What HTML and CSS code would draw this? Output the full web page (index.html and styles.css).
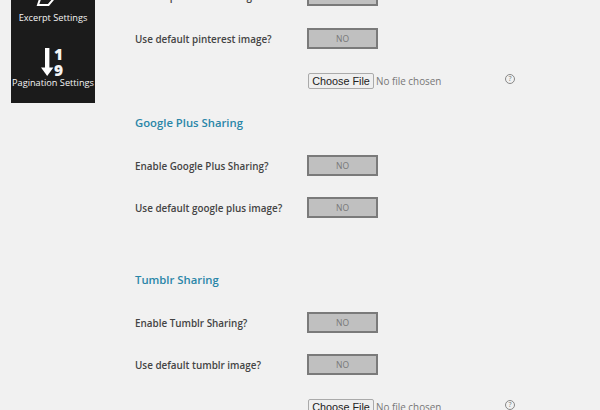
FILE: index.html
```html
<!DOCTYPE html>
<html lang="en">
<head>
    <meta charset="UTF-8">
    <meta name="viewport" content="width=device-width, initial-scale=1.0">
    <title>Sharing Settings</title>
    <link rel="stylesheet" href="styles.css">
</head>
<body>
    <div class="page">
        <div class="sidebar">
            <div class="side-item excerpt">
                <svg class="icon-excerpt" width="24" height="12" viewBox="0 0 24 12">
                    <path d="M5 -4 L2 5 H12.5 L20 -4" fill="none" stroke="#fff" stroke-width="2"/>
                </svg>
                <span>Excerpt Settings</span>
            </div>
            <div class="side-item pagination">
                <svg class="icon-sort" width="30" height="30" viewBox="0 0 30 30">
                    <rect x="4" y="1" width="4.4" height="21" fill="#fff"/>
                    <path d="M0 20.5 H12.4 L6.2 29 Z" fill="#fff"/>
                </svg>
                <div class="digits"><b>1</b><b>9</b></div>
                <span>Pagination Settings</span>
            </div>
        </div>

        <div class="content">
            <div class="row first">
                <label>Enable pinterest Sharing?</label>
                <div class="toggle">NO</div>
            </div>
            <div class="row">
                <label>Use default pinterest image?</label>
                <div class="toggle">NO</div>
            </div>
            <div class="row file-row">
                <label></label>
                <input type="file" class="file">
                <span class="help">?</span>
            </div>

            <h3 class="google">Google Plus Sharing</h3>
            <div class="row">
                <label>Enable Google Plus Sharing?</label>
                <div class="toggle">NO</div>
            </div>
            <div class="row">
                <label>Use default google plus image?</label>
                <div class="toggle">NO</div>
            </div>

            <h3 class="tumblr">Tumblr Sharing</h3>
            <div class="row">
                <label>Enable Tumblr Sharing?</label>
                <div class="toggle">NO</div>
            </div>
            <div class="row">
                <label>Use default tumblr image?</label>
                <div class="toggle">NO</div>
            </div>
            <div class="row file-row">
                <label></label>
                <input type="file" class="file">
                <span class="help">?</span>
            </div>
        </div>
    </div>
</body>
</html>
```

FILE: styles.css
```css
html, body {
    margin: 0;
    height: 410px;
    overflow: hidden;
    background: #f1f1f1;
    font-family: "Open Sans", sans-serif;
}

.page {
    display: flex;
    height: 410px;
    overflow: hidden;
}

.sidebar {
    width: 84px;
    height: 103px;
    margin-left: 11px;
    background: #1b1b1b;
    color: #f4f4f4;
    font-size: 9.2px;
    text-align: center;
    flex-shrink: 0;
}

.side-item span {
    display: block;
    white-space: nowrap;
}

.excerpt {
    height: 24px;
}

.icon-excerpt {
    display: block;
    margin-left: 25px;
}

.excerpt span {
    line-height: 11px;
}

.pagination {
    position: relative;
    padding-top: 23px;
}

.icon-sort {
    display: block;
    margin-left: 30px;
}

.digits {
    position: absolute;
    left: 43px;
    top: 24px;
    display: flex;
    flex-direction: column;
    gap: 3px;
    font-size: 15.5px;
    line-height: 13px;
    font-weight: 700;
}

.pagination span {
    line-height: 12px;
}

.content {
    margin-left: 40px;
    margin-top: -15px;
    flex: 1;
}

.row {
    display: flex;
    align-items: center;
    height: 21px;
    margin-bottom: 21px;
}

.row.first {
    margin-bottom: 22px;
}

.row label {
    width: 172px;
    flex-shrink: 0;
    font-size: 9.9px;
    font-weight: 600;
    color: #444;
}

.toggle {
    box-sizing: border-box;
    width: 71px;
    height: 21px;
    background: #c0c0c0;
    border: 2px solid #7a7a7a;
    color: #777;
    font-size: 8.5px;
    line-height: 17px;
    text-align: center;
}

.file-row {
    height: 18px;
    margin-bottom: 0;
    margin-top: 23px; /* collapses with the 21px of the row above */
    position: relative;
}

.file {
    font-family: "Open Sans", sans-serif;
    font-size: 9.9px;
    color: #777;
    width: 190px;
    margin-left: 1px;
}

.file::file-selector-button {
    font-family: "Liberation Sans", sans-serif;
    font-size: 10.8px;
    color: #222;
    height: 16px;
    width: 66px;
    padding: 0;
    margin-right: 2px;
    background: #efefef;
    border: 1px solid #aaa;
    border-radius: 2px;
}

.help {
    box-sizing: border-box;
    position: absolute;
    left: 370px;
    top: 2px;
    width: 10px;
    height: 10px;
    border: 1px solid #888;
    border-radius: 50%;
    color: #777;
    font-size: 7px;
    line-height: 8px;
    text-align: center;
}

h3 {
    margin: 0;
    font-size: 11.3px;
    line-height: 16px;
    font-weight: 600;
    color: #2a86a8;
}

.google {
    margin-top: 25px;
    margin-bottom: 24px;
}

.tumblr {
    margin-top: 54px;
    margin-bottom: 24px;
}
```
